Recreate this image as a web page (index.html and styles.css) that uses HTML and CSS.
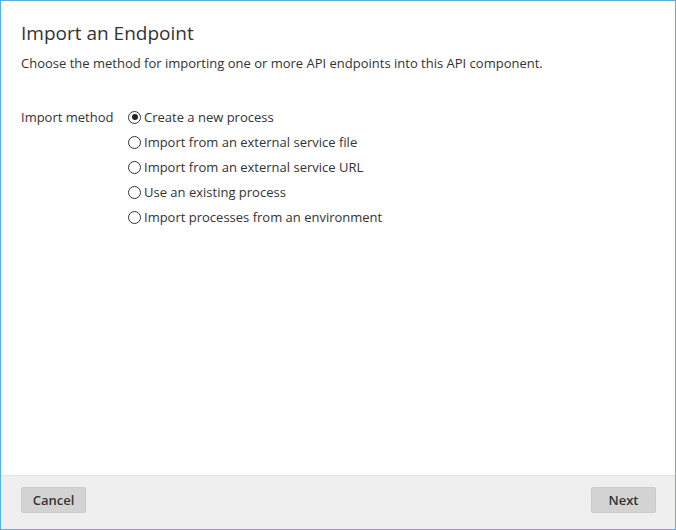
FILE: index.html
```html
<!DOCTYPE html>
<html>
<head>
<meta charset="utf-8">
<link rel="stylesheet" href="styles.css">
</head>
<body>
<div class="dialog">
  <div class="content">
    <h1 class="title">Import an Endpoint</h1>
    <p class="desc">Choose the method for importing one or more API endpoints into this API component.</p>
    <div class="field">
      <div class="label">Import method</div>
      <div class="options">
        <label class="opt"><span class="radio checked"></span>Create a new process</label>
        <label class="opt"><span class="radio"></span>Import from an external service file</label>
        <label class="opt"><span class="radio"></span>Import from an external service URL</label>
        <label class="opt"><span class="radio"></span>Use an existing process</label>
        <label class="opt"><span class="radio"></span>Import processes from an environment</label>
      </div>
    </div>
  </div>
  <div class="footer">
    <button class="btn">Cancel</button>
    <button class="btn">Next</button>
  </div>
</div>
</body>
</html>
```
FILE: styles.css
```css
html, body { margin: 0; padding: 0; }
body {
  font-family: "Open Sans", sans-serif;
  color: #333;
  background: #fff;
}
.dialog {
  width: 676px;
  height: 530px;
  box-sizing: border-box;
  border: 1px solid #5aafe0;
  display: flex;
  flex-direction: column;
}
.content {
  flex: 1;
  padding: 19px 20px 0 20px;
}
.title {
  margin: 0;
  font-size: 19px;
  font-weight: 400;
  line-height: 26px;
  color: #333;
}
.desc {
  margin: 7px 0 0 0;
  font-size: 13px;
  line-height: 20px;
}
.field {
  display: flex;
  margin-top: 34px;
  font-size: 13px;
}
.label {
  width: 107px;
  line-height: 20px;
}
.options {
  display: flex;
  flex-direction: column;
  gap: 5px;
}
.opt {
  display: flex;
  align-items: center;
  line-height: 20px;
}
.radio {
  width: 11px;
  height: 11px;
  border: 1px solid #333;
  border-radius: 50%;
  margin-right: 3px;
  box-sizing: content-box;
  position: relative;
}
.radio.checked::after {
  content: "";
  position: absolute;
  left: 2.5px;
  top: 2.5px;
  width: 6px;
  height: 6px;
  border-radius: 50%;
  background: #222;
}
.footer {
  height: 54px;
  box-sizing: border-box;
  border-top: 1px solid #e2e2e2;
  background: #efefef;
  display: flex;
  justify-content: space-between;
  align-items: flex-start;
  padding: 11px 19px 0 20px;
}
.btn {
  font-family: "Open Sans", sans-serif;
  font-size: 13px;
  font-weight: 600;
  color: #333;
  background: #d3d3d3;
  border: 1px solid #cbcbcb;
  border-radius: 2px;
  height: 26px;
  width: 65px;
  padding: 0;
}
```
